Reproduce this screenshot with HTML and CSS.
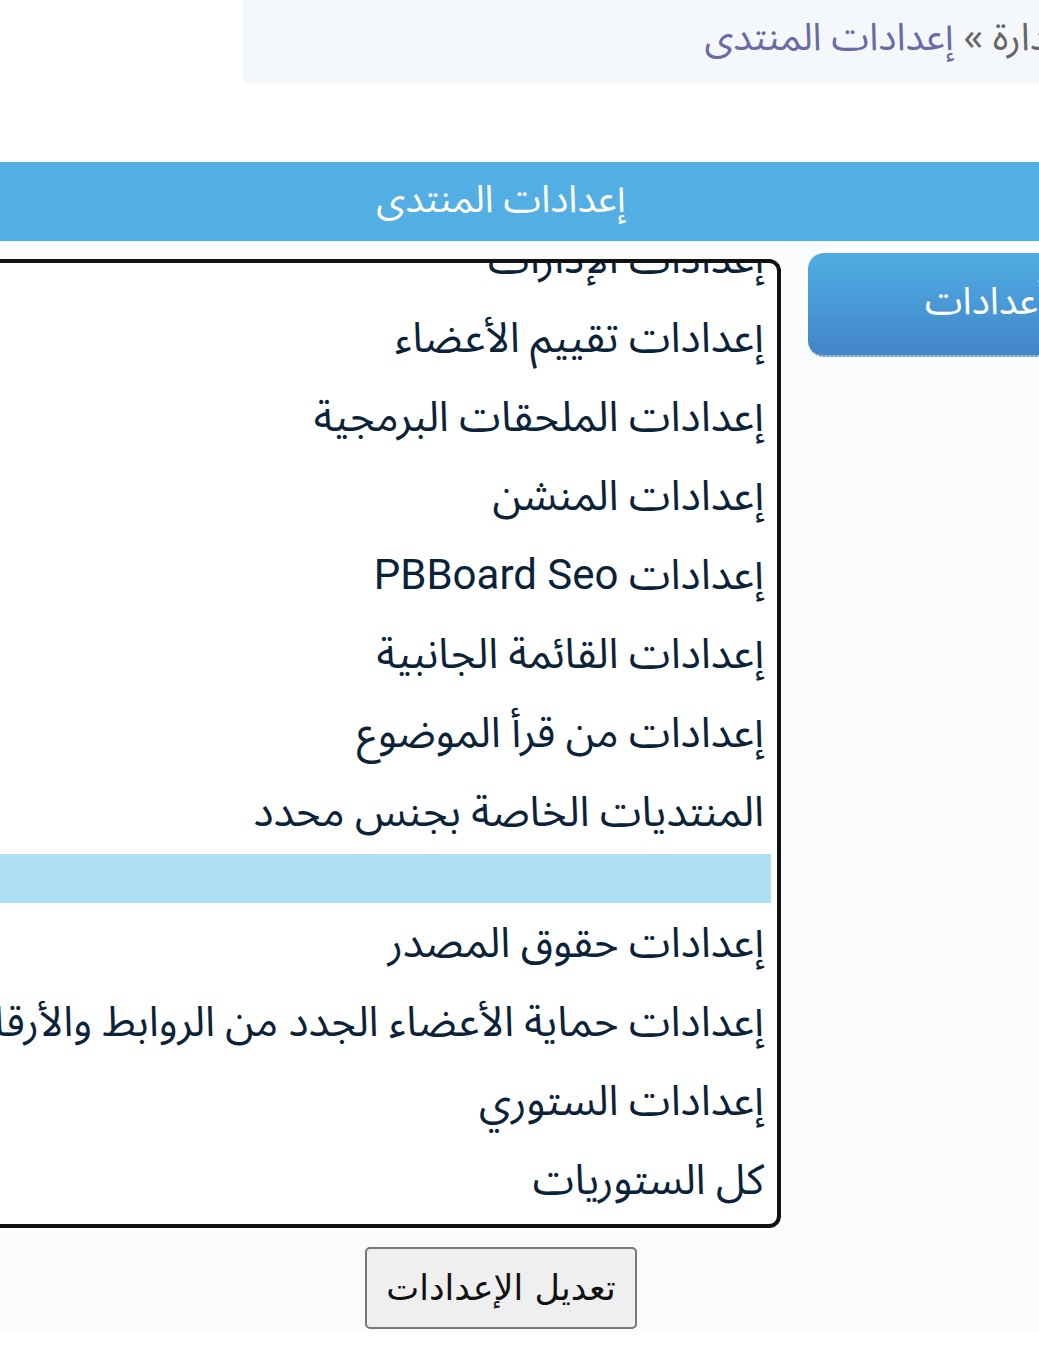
FILE: index.html
```html
<!DOCTYPE html>
<html lang="ar" dir="rtl">

<head>
    <meta charset="UTF-8">
    <meta name="viewport" content="width=device-width, initial-scale=1.0">
    <title>إعدادات المنتدى</title>
    <link rel="stylesheet" href="styles.css">
</head>

<body>
    <div class="page">
        <div class="nav">
            <span class="crumb">الإدارة</span> » <a href="#" class="crumb-link">إعدادات المنتدى</a>
        </div>

        <div class="title">إعدادات المنتدى</div>

        <div class="content">
            <div class="cols">
                <div class="side">
                    <div class="side-btn">أعدادات</div>
                </div>

                <div class="main">
                    <div class="listbox">
                        <div class="items">
                            <div class="item">إعدادات الإدارات</div>
                            <div class="item">إعدادات تقييم الأعضاء</div>
                            <div class="item">إعدادات الملحقات البرمجية</div>
                            <div class="item">إعدادات المنشن</div>
                            <div class="item">إعدادات PBBoard Seo</div>
                            <div class="item">إعدادات القائمة الجانبية</div>
                            <div class="item">إعدادات من قرأ الموضوع</div>
                            <div class="item">المنتديات الخاصة بجنس محدد</div>
                            <div class="item blank"></div>
                            <div class="item">إعدادات حقوق المصدر</div>
                            <div class="item">إعدادات حماية الأعضاء الجدد من الروابط والأرقام</div>
                            <div class="item">إعدادات الستوري</div>
                            <div class="item">كل الستوريات</div>
                        </div>
                    </div>
                </div>
            </div>

            <div class="actions">
                <button class="btn">تعديل الإعدادات</button>
            </div>
        </div>
    </div>
</body>

</html>
```

FILE: styles.css
```css
* {
    margin: 0;
    padding: 0;
    box-sizing: border-box;
}

body {
    background: #ffffff;
    overflow: hidden;
    font-family: "Noto Sans Arabic", "Noto Sans", "DejaVu Sans", sans-serif;
}

.page {
    direction: rtl;
    width: 1302px;
    margin-right: -113px;
}

.nav {
    margin-left: 392px;
    height: 83px;
    background: #f5f8fa;
    padding-right: 73px;
    font-size: 38px;
    line-height: 76px;
    color: #666666;
    white-space: nowrap;
}

.crumb-link {
    color: #6a6aa6;
    text-decoration: none;
}

.title {
    margin-top: 79px;
    height: 79px;
    background: #52aee3;
    color: #ffffff;
    text-align: center;
    font-size: 38px;
    line-height: 76px;
}

.content {
    background: #f9fbfd;
    padding-top: 12px;
    padding-bottom: 2px;
}

.cols {
    display: grid;
    grid-template-columns: 344px 1fr;
    gap: 27px;
}

.side-btn {
    height: 104px;
    border-radius: 16px 0 0 16px;
    border-bottom: 2px dotted #bbbbbb;
    background: linear-gradient(#4fade3, #4385c9);
    color: #ffffff;
    font-size: 38px;
    line-height: 98px;
    text-align: center;
    padding-left: 12px;
    white-space: nowrap;
}

.main {
    padding-top: 6px;
}

.listbox {
    height: 969px;
    border: 4px solid #111111;
    border-radius: 12px;
    background: #ffffff;
    overflow: hidden;
}

.items {
    margin-top: -44px;
    padding-right: 6px;
}

.item {
    height: 79px;
    line-height: 79px;
    padding-right: 7px;
    font-family: Roboto, "Noto Sans Arabic", sans-serif;
    font-size: 42px;
    color: #0b2338;
    white-space: nowrap;
}

.item.blank {
    height: 49px;
    margin-top: 3px;
    background: #ade0f5;
}

.actions {
    padding-top: 19px;
    text-align: center;
}

.btn {
    width: 272px;
    height: 82px;
    background: #efefef;
    border: 2px solid #777777;
    border-radius: 5px;
    font-family: "DejaVu Sans", sans-serif;
    font-size: 35px;
    color: #111111;
}
```
